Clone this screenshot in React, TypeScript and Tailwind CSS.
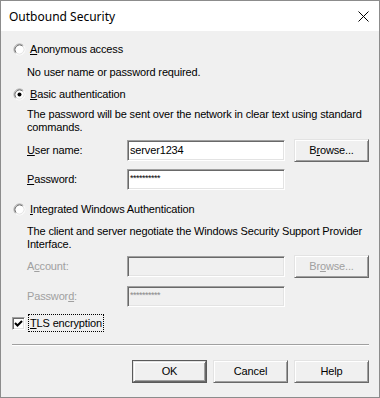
import React from "react";

const sunken =
  "border-t border-l border-t-[#a0a0a0] border-l-[#a0a0a0] border-b border-r border-b-white border-r-white shadow-[inset_1px_1px_0_#696969,inset_-1px_-1px_0_#e3e3e3]";
const raised =
  "border-t border-l border-t-[#e3e3e3] border-l-[#e3e3e3] border-b border-r border-b-[#696969] border-r-[#696969] shadow-[inset_1px_1px_0_#ffffff,inset_-1px_-1px_0_#a0a0a0]";

function Radio({ checked }: { checked?: boolean }) {
  return (
    <svg width="13" height="13" viewBox="0 0 13 13" className="shrink-0">
      <circle cx="6.5" cy="6.5" r="5" fill="#ffffff" />
      <path d="M2.61 10.39 A5.5 5.5 0 0 1 10.39 2.61" fill="none" stroke="#a0a0a0" />
      <path d="M10.39 2.61 A5.5 5.5 0 0 1 2.61 10.39" fill="none" stroke="#ffffff" />
      <path d="M3.32 9.68 A4.5 4.5 0 0 1 9.68 3.32" fill="none" stroke="#696969" />
      <path d="M9.68 3.32 A4.5 4.5 0 0 1 3.32 9.68" fill="none" stroke="#e3e3e3" />
      {checked && <circle cx="6.5" cy="6.5" r="2" fill="#000000" />}
    </svg>
  );
}

function Button({
  children,
  disabled,
  isDefault,
  className = "",
}: {
  children: React.ReactNode;
  disabled?: boolean;
  isDefault?: boolean;
  className?: string;
}) {
  const inner = (
    <div
      className={`flex items-center justify-center bg-[#f0f0f0] w-full h-full ${raised} ${
        disabled ? "text-[#a0a0a0]" : "text-black"
      }`}
    >
      {children}
    </div>
  );
  if (isDefault) {
    return (
      <div className={`w-[75px] h-[23px] border border-[#5a5a5a] ${className}`}>{inner}</div>
    );
  }
  return <div className={`w-[75px] h-[23px] ${className}`}>{inner}</div>;
}

function Field({
  label,
  value,
  disabled,
  browse,
  top,
}: {
  label: React.ReactNode;
  value: string;
  disabled?: boolean;
  browse?: React.ReactNode;
  top: string;
}) {
  return (
    <div className={`flex items-center h-[21px] ${top}`}>
      <div className={`w-[100px] ml-[14px] ${disabled ? "text-[#a0a0a0]" : "text-black"}`}>
        {label}
      </div>
      <div
        className={`w-[158px] h-[21px] flex items-center pl-[2px] ${sunken} ${
          disabled ? "bg-[#f0f0f0] text-[#8a8a8a]" : "bg-white text-black"
        }`}
      >
        <span className={value.startsWith("*") ? "text-[9px] tracking-[-0.5px] -mt-[3px]" : ""}>
          {value}
        </span>
      </div>
      {browse && <Button disabled={disabled} className="ml-[9px]">{browse}</Button>}
    </div>
  );
}

export default function App() {
  return (
    <div
      className="w-[380px] h-[398px] border border-[#8c8c8c] bg-[#f0f0f0] flex flex-col text-[11px] leading-[13px] tracking-[-0.15px] text-black"
      style={{ fontFamily: '"Liberation Sans", Arial, sans-serif' }}
    >
      <div className="h-[30px] bg-white flex items-center justify-between pl-[8px] pr-[10px] tracking-normal">
        <span className="text-[12px] text-black" style={{ fontFamily: '"Noto Sans", sans-serif' }}>
          Outbound Security
        </span>
        <svg width="11" height="11" viewBox="0 0 11 11">
          <path d="M0.5 0.5 L10.5 10.5 M10.5 0.5 L0.5 10.5" stroke="#000" strokeWidth="1" />
        </svg>
      </div>

      <div className="flex-1 flex flex-col pl-[12px] pr-[10px]">
        <div className="flex items-center h-[14px] mt-[11px] gap-[4px]">
          <Radio />
          <span>
            <u>A</u>nonymous access
          </span>
        </div>
        <div className="ml-[14px] mt-[10px]">No user name or password required.</div>

        <div className="flex items-center h-[14px] mt-[8px] gap-[4px]">
          <Radio checked />
          <span>
            <u>B</u>asic authentication
          </span>
        </div>
        <div className="ml-[14px] mt-[7px] whitespace-nowrap">
          The password will be sent over the network in clear text using standard
          <br />
          commands.
        </div>

        <Field
          top="mt-[6px]"
          label={
            <>
              <u>U</u>ser name:
            </>
          }
          value="server1234"
          browse={
            <>
              B<u>r</u>owse...
            </>
          }
        />
        <Field
          top="mt-[8px]"
          label={
            <>
              <u>P</u>assword:
            </>
          }
          value="**********"
        />

        <div className="flex items-center h-[14px] mt-[12px] gap-[4px]">
          <Radio />
          <span>
            <u>I</u>ntegrated Windows Authentication
          </span>
        </div>
        <div className="ml-[14px] mt-[9px] whitespace-nowrap">
          The client and server negotiate the Windows Security Support Provider
          <br />
          Interface.
        </div>

        <Field
          top="mt-[5px]"
          disabled
          label={
            <>
              A<u>c</u>count:
            </>
          }
          value=""
          browse={
            <>
              Br<u>o</u>wse...
            </>
          }
        />
        <Field
          top="mt-[9px]"
          disabled
          label={
            <>
              Passwor<u>d</u>:
            </>
          }
          value="**********"
        />

        <div className="flex items-center h-[18px] mt-[7px] -ml-px">
          <div className={`w-[13px] h-[13px] bg-white flex items-center justify-center ${sunken}`}>
            <svg width="9" height="9" viewBox="0 0 9 9">
              <path d="M1 4 L3.5 6.5 L8 2" fill="none" stroke="#000" strokeWidth="2" />
            </svg>
          </div>
          <span className="ml-[3px] h-[18px] flex items-center px-px border border-dotted border-black">
            <u>T</u>LS encryption
          </span>
        </div>

        <div className="mt-[12px] -ml-px w-[357px] h-[2px] border-t border-t-[#a0a0a0] border-b border-b-white" />

        <div className="flex justify-end gap-[6px] mt-[14px]">
          <Button isDefault>OK</Button>
          <Button>Cancel</Button>
          <Button>Help</Button>
        </div>
      </div>
    </div>
  );
}
